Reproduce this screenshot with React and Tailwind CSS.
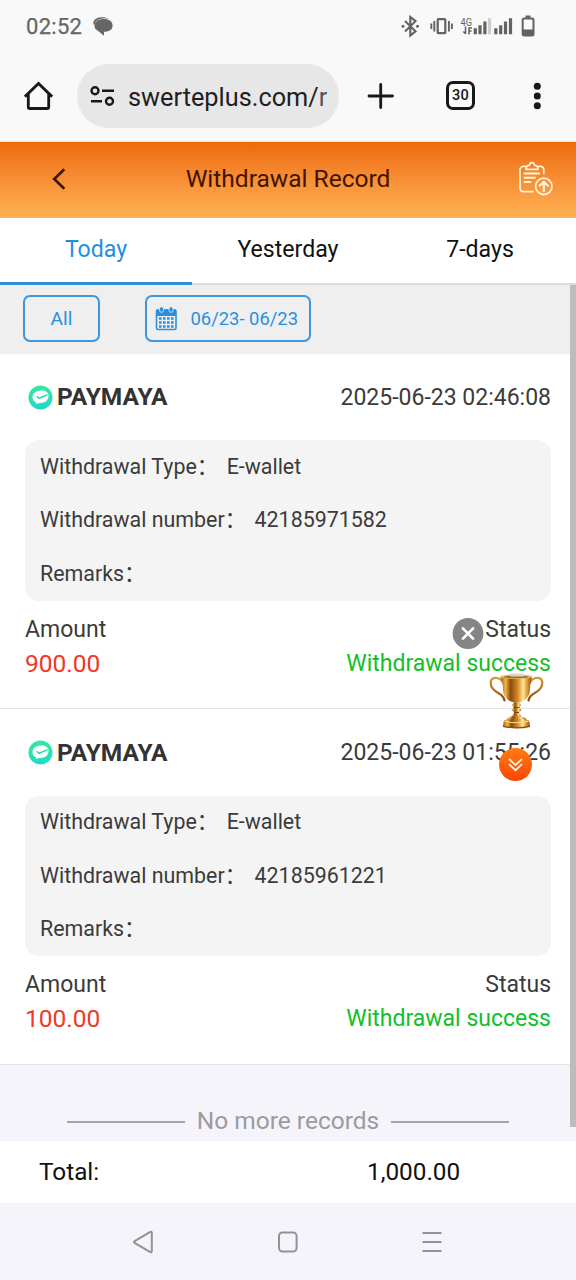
import { useState } from 'react';
import clsx from 'clsx';

const TABS = ['Today', 'Yesterday', '7-days'];

const RECORDS = [
    { id: 1, time: '2025-06-23 02:46:08', type: 'E-wallet', number: '42185971582', remarks: '', amount: '900.00' },
    { id: 2, time: '2025-06-23 01:55:26', type: 'E-wallet', number: '42185961221', remarks: '', amount: '100.00' },
];

const StatusIcons = () => (
    <svg width="140" height="26" viewBox="400 13.500 140 26" fill="none" stroke="#626262" strokeWidth="2">
        {/* bluetooth */}
        <path d="M405 20.500l10.500 10.300-5.200 4.200V16.500l5.200 4.200-10.500 10.300" strokeWidth="2.100" />
        <circle cx="403" cy="25.700" r="1.500" fill="#626262" stroke="none" />
        <circle cx="417.500" cy="25.700" r="1.500" fill="#626262" stroke="none" />
        {/* vibrate */}
        <rect x="437.700" y="18.700" width="7.600" height="14" rx="0.8" strokeWidth="2.200" />
        <path d="M434.300 20.500v10.500M431.300 23v5.500M448.900 20.500v10.500M451.900 23v5.500" strokeWidth="1.900" />
        {/* network */}
        <text x="460.500" y="25.700" fontSize="10" fontFamily="Roboto, sans-serif" fill="#626262" stroke="none" textLength="11.500" lengthAdjust="spacingAndGlyphs">4G</text>
        <path d="M465.500 26v7.500M463.300 31l2.200 2.200M469 34v-7M469 27.500h3M469 30.500h2.500" strokeWidth="1.500" />
        <path d="M475.300 33.800v-6M480 33.800v-9M484.900 33.800v-12.800" strokeWidth="3.200" />
        <path d="M489.500 33.800v-16" strokeWidth="3.200" stroke="#cdcdcd" />
        <path d="M495.800 33.800v-6M500.700 33.800v-9M505.500 33.800v-12.800M510.500 33.800v-16" strokeWidth="3.200" />
        {/* battery */}
        <rect x="522.700" y="18" width="10.800" height="17" rx="1.500" />
        <path d="M525.500 16.200h5" strokeWidth="2.400" />
        <path d="M523 29h10v6h-10z" fill="#626262" stroke="none" />
    </svg>
);

const StatusBar = () => (
    <div className="h-[53px] flex items-center justify-between pl-[26px] pr-9">
        <div className="flex items-center gap-[11px]">
            <span className="text-[22px] leading-none tracking-[0.3px] text-[#666] [-webkit-text-stroke:0.25px_#666]">02:52</span>
            <svg width="20" height="19" viewBox="0 0 20 19">
                <path d="M0.300 7C0 2.800 3.500 0.400 8 0.200c3-.2 6 .3 8 1.600-2.500-.7-6-.9-9 .1C3.500 3 2 5 1.300 8z" fill="#666" />
                <path d="M11 2c5 0 8.600 2.600 8.600 6.500 0 3.800-3 6.200-8.600 6.300V18.700L4.500 13.600C2.300 12.300 1.500 10.700 1.500 8.500 1.500 4.600 5.500 2 11 2z" fill="#666" />
            </svg>
        </div>
        <StatusIcons />
    </div>
);

const BrowserBar = () => (
    <div className="flex-1 flex items-start pt-[11px]">
        <svg className="mt-[17px] ml-6 shrink-0" width="29" height="30" viewBox="0 0 29 30" fill="none" stroke="#181818" strokeWidth="2.800">
            <path d="M0.900 15.700L14.500 2.500l13.600 13.200" />
            <path d="M4.300 13v13a1.500 1.500 0 0 0 1.500 1.500h17.400a1.500 1.500 0 0 0 1.500-1.500V13" />
        </svg>
        <div className="ml-6 h-[64px] w-[262px] shrink-0 rounded-full bg-[#e7e7e7] flex items-center pl-[13px]">
            <svg className="shrink-0" width="26" height="22" viewBox="0 0 26 22" fill="none" stroke="#181818" strokeWidth="2.400">
                <circle cx="5" cy="5.700" r="3.500" />
                <path d="M12 5.700h12M1 16.200h11" />
                <circle cx="19.500" cy="16.200" r="3.500" />
            </svg>
            <span className="ml-3 mt-[3px] w-[199px] overflow-hidden whitespace-nowrap text-[25.300px] text-[#1f1f1f]">
                swerteplus.com/<span className="text-[#555]">r</span>
            </span>
        </div>
        <svg className="mt-[18px] ml-[28px] shrink-0" width="28" height="28" viewBox="0 0 28 28" fill="none" stroke="#181818" strokeWidth="2.800" strokeLinecap="round">
            <path d="M13.700 2.500v23M2 14h23.500" />
        </svg>
        <div className="mt-[17px] ml-[51px] w-[29px] h-[29px] shrink-0 rounded-[7px] border-3 border-[#181818] flex items-center justify-center">
            <span className="pt-[2px] text-[14.500px] leading-none font-medium tracking-[0.2px] text-[#181818]">30</span>
        </div>
        <svg className="mt-[18px] ml-[58px] shrink-0" width="8" height="28" viewBox="0 0 8 28" fill="#181818">
            <circle cx="4.300" cy="4.300" r="3.500" />
            <circle cx="4.300" cy="14" r="3.500" />
            <circle cx="4.300" cy="23.700" r="3.500" />
        </svg>
    </div>
);

const PageHeader = () => (
    <header className="h-[76px] shrink-0 grid grid-cols-[1fr_auto_1fr] items-center pb-[2px] bg-gradient-to-b from-[#ee6a04] to-[#ffb253]">
        <button type="button" aria-label="Back" className="ml-[51px] justify-self-start">
            <svg width="16" height="24" viewBox="0 0 16 24" fill="none" stroke="#3a1608" strokeWidth="2.600">
                <path d="M13.300 2.200L3.200 12l10.100 9.800" />
            </svg>
        </button>
        <h1 className="text-[24.500px] leading-none text-[#431400]">Withdrawal Record</h1>
        <svg className="mr-[22px] justify-self-end" width="36" height="36" viewBox="0 0 36 36" fill="none" stroke="#fff4e0" strokeWidth="1.700" strokeLinecap="round" strokeLinejoin="round">
            <path d="M7.500 5.400H5.300A3.300 3.300 0 0 0 2 8.700v18.700a3.300 3.300 0 0 0 3.300 3.300h9.500M20.500 5.400h2a3.300 3.300 0 0 1 3.300 3.300v3.800" />
            <path d="M8 8.300c0-2.800 1.200-3.900 3.400-3.900.3-1.700 1.100-2.700 2.600-2.700s2.300 1 2.600 2.700c2.200 0 3.400 1.100 3.400 3.900z" />
            <path d="M6.500 12.500h14.800M6.500 16.700h10.500M6.500 21h6" strokeWidth="1.900" />
            <circle cx="25.800" cy="25.400" r="8.200" />
            <path d="M25.800 30.200v-9.200M21.700 24.700l4.100-4 4.100 4" strokeWidth="2.200" />
        </svg>
    </header>
);

const MayaIcon = () => (
    <svg width="25" height="25" viewBox="0 0 25 25">
        <defs>
            <linearGradient id="maya" x1="0" y1="0" x2="0" y2="1">
                <stop offset="0" stopColor="#36e8a0" />
                <stop offset="1" stopColor="#1ed9cb" />
            </linearGradient>
        </defs>
        <circle cx="12.500" cy="12.500" r="12" fill="url(#maya)" />
        <path d="M4.500 12C4.900 7.800 8.500 5.800 13 5.600c4.500-.2 7.700 1.800 7.500 5.600-.2 4-3.500 6.800-8.500 6.900-1.500.1-2.600.8-4.300.5.300-.5.200-1 0-1.500C5.500 16 4.300 14.200 4.500 12z" fill="#fff" />
        <path d="M8.700 11.200l2.500 2.100 8.300-3.700" fill="none" stroke="#27d9ac" strokeWidth="1.500" />
    </svg>
);

const DetailRow = ({ label, value }) => (
    <div className="h-[53.500px] flex items-center gap-[8.500px] text-[21.400px] text-[#3b3b3b]">
        <span>{label}：</span>
        <span>{value}</span>
    </div>
);

const RecordCard = ({ record }) => (
    <article className="h-[355.400px] shrink-0 bg-white border-b border-[#e3e3e3] px-[25px]">
        <div className="h-[86.200px] flex items-center justify-between pt-px">
            <div className="flex items-center gap-[4px] pl-[3px]">
                <MayaIcon />
                <span className="text-[24.500px] font-bold text-[#333]">PAYMAYA</span>
            </div>
            <time className="pt-px text-[23px] text-[#3b3b3b]">{record.time}</time>
        </div>
        <div className="h-[160.500px] rounded-[14px] bg-[#f4f4f4] px-[15px]">
            <DetailRow label="Withdrawal Type" value={record.type} />
            <DetailRow label="Withdrawal number" value={record.number} />
            <DetailRow label="Remarks" value={record.remarks} />
        </div>
        <div className="flex justify-between pt-[11px] text-[23px] leading-[35px] text-[#3b3b3b]">
            <div>
                <p>Amount</p>
                <p className="text-[24.500px] leading-[34px] text-[#ee3a24]">{record.amount}</p>
            </div>
            <div className="text-right">
                <p>Status</p>
                <p className="leading-[33px] text-[#10c129]">Withdrawal success</p>
            </div>
        </div>
    </article>
);

const Trophy = () => (
    <svg width="56" height="56" viewBox="0 0 56 56">
        <defs>
            <linearGradient id="cup">
                <stop offset="0" stopColor="#9b5710" />
                <stop offset="0.16" stopColor="#f2b64a" />
                <stop offset="0.32" stopColor="#8c4b0d" />
                <stop offset="0.55" stopColor="#d58b26" />
                <stop offset="0.72" stopColor="#ffe79a" />
                <stop offset="0.86" stopColor="#d9952f" />
                <stop offset="1" stopColor="#84480e" />
            </linearGradient>
            <linearGradient id="handle" x1="0" y1="0" x2="0" y2="1">
                <stop offset="0" stopColor="#d39b38" />
                <stop offset="0.5" stopColor="#b8731b" />
                <stop offset="1" stopColor="#8b4b12" />
            </linearGradient>
        </defs>
        <path d="M14 9.500C10.500 3.500 3 3.500 1.800 8.500 1 14.500 5 17.500 10 20.500c3.500 2 5 4 5.500 7" fill="none" stroke="url(#handle)" strokeWidth="2.200" strokeLinecap="round" />
        <path d="M41 9.500C44.500 3.500 52 3.500 53.200 8.500 54 14.500 50 17.500 45 20.500c-3.500 2-5 4-5.500 7" fill="none" stroke="url(#handle)" strokeWidth="2.200" strokeLinecap="round" />
        <path d="M11.500 4h31.500c-1.200 4-1.800 7-2 12.500-.3 7.500-5 12.500-13.500 13.500-8.500-1-13.200-6-13.500-13.500-.2-5.500-1-8.500-2.500-12.500z" fill="url(#cup)" />
        <ellipse cx="27.300" cy="3.700" rx="16" ry="2.200" fill="#e5ba68" />
        <ellipse cx="27.300" cy="3.900" rx="12.500" ry="1.300" fill="#a66c24" />
        <path d="M21.500 0.500h13v3h-13z" fill="#dbd7cd" />
        <path d="M24.500 29.500h6l1.500 2.800-2 2.200 2.500 2.500-2.500 2.500 2.500 4.500H22.500l2.500-4.500-2.500-2.500 2.500-2.500-2-2.200z" fill="url(#cup)" />
        <path d="M24.500 34.500h6M25 39.500h5" stroke="#7d430d" strokeWidth="1" />
        <path d="M17 47.500c1.500-3.500 5.500-4.500 10.500-4.500s9 1 10.500 4.500z" fill="url(#cup)" />
        <path d="M15 47.500q12.500-3.500 25 0l1.200 6q-13.500 3-27.400 0z" fill="url(#cup)" />
        <path d="M15.500 48.300q12 3 24 0" fill="none" stroke="#fbe08c" strokeWidth="1.100" />
        <path d="M14 53.300q13.500 3 27 0" fill="none" stroke="#8b4b0d" strokeWidth="1.300" />
    </svg>
);

/* Promo widget that floats over the list */
const FloatingPromo = () => (
    <>
        <button type="button" aria-label="Close" className="absolute left-[452px] top-[618px]">
            <svg width="32" height="32" viewBox="0 0 32 32">
                <circle cx="16" cy="15.500" r="15.400" fill="#858585" />
                <path d="M10.900 10.400l10.200 10.200M21.100 10.400L10.900 20.600" stroke="#fff" strokeWidth="2.700" strokeLinecap="round" />
            </svg>
        </button>
        <div className="absolute left-[489px] top-[673px]">
            <Trophy />
        </div>
        <button type="button" aria-label="Expand" className="absolute left-[499px] top-[748px] w-[33px] h-[33px] rounded-full bg-gradient-to-b from-[#ff7a12] to-[#f94406] flex items-center justify-center">
            <svg width="17" height="17" viewBox="0 0 17 17" fill="none" stroke="#fff0df" strokeWidth="1.800">
                <path d="M2 3l6.500 6L15 3M2 8.200l6.500 6 6.500-6" />
            </svg>
        </button>
    </>
);

const CalendarIcon = () => (
    <svg width="22" height="25" viewBox="0 0 22 25" fill="#2b8fdd">
        <path d="M1.500 3.500h19.500V10h-19.500z" />
        <rect x="1.500" y="4" width="19.500" height="19.500" rx="1.500" fill="none" stroke="#2b8fdd" strokeWidth="1.600" />
        <rect x="4.500" y="0.800" width="4" height="5.500" rx="2" stroke="#efefef" strokeWidth="0.800" />
        <rect x="14" y="0.800" width="4" height="5.500" rx="2" stroke="#efefef" strokeWidth="0.800" />
        <path d="M4 12.500h14.700M4 16.500h14.700M4 20.500h14.700" stroke="#2b8fdd" strokeWidth="2.500" strokeDasharray="2.600 1.400" />
    </svg>
);

const App = () => {
    const [activeTab, setActiveTab] = useState('Today');

    return (
        <div className="relative w-[576px] h-[1280px] overflow-hidden flex flex-col bg-[#f5f4fa] font-[Roboto,'Noto_Sans_CJK_SC',sans-serif]">
            <div className="h-[142px] shrink-0 flex flex-col bg-[#f9f9f9] border-b border-[#e4e8ec]">
                <StatusBar />
                <BrowserBar />
            </div>

            <PageHeader />

            <nav className="h-[67px] shrink-0 grid grid-cols-3 bg-white">
                {TABS.map((tab) => (
                    <button
                        key={tab}
                        type="button"
                        onClick={() => setActiveTab(tab)}
                        className={clsx(
                            'text-[23.100px]',
                            tab === activeTab
                                ? 'pt-px border-b-[3px] border-[#2b8fdd] text-[#1f8fe0]'
                                : 'border-b-2 border-[#dcdcdc] text-[#111]'
                        )}
                    >
                        {tab}
                    </button>
                ))}
            </nav>

            <div className="h-[69px] shrink-0 flex items-start bg-[#efefef] pt-[10px] pl-[23px]">
                <button type="button" className="w-[77px] h-[47px] rounded-[7px] border-2 border-[#3c97de] pt-px text-[19.200px] text-[#2b8fdd]">
                    All
                </button>
                <button type="button" className="ml-[45px] w-[166px] h-[47px] rounded-[7px] border-2 border-[#3c97de] flex items-center pl-[8px] gap-[13.500px] text-[18.400px] text-[#2b8fdd]">
                    <CalendarIcon />
                    <span className="whitespace-nowrap">06/23- 06/23</span>
                </button>
            </div>

            <main className="flex-1 min-h-0 flex flex-col">
                {RECORDS.map((record) => (
                    <RecordCard key={record.id} record={record} />
                ))}
                <div className="flex-1 flex items-end justify-center gap-3 pb-px text-[24.500px] text-[#9b9b9f]">
                    <span className="mb-[17px] w-[118px] h-[2px] bg-[#a4a4a8]" />
                    <span className="whitespace-nowrap">No more records</span>
                    <span className="mb-[17px] w-[118px] h-[2px] bg-[#a4a4a8]" />
                </div>
            </main>

            <div className="h-[62px] shrink-0 flex items-center bg-white pl-[39px] text-[24.300px] text-[#111]">
                <span className="w-[328px]">Total:</span>
                <span>1,000.00</span>
            </div>

            <footer className="h-[77px] shrink-0 flex items-center justify-between pl-[132px] pr-[134px]">
                <svg width="22" height="24" viewBox="0 0 22 24" fill="none" stroke="#929296" strokeWidth="2" strokeLinejoin="round">
                    <path d="M18.300 1.900L2.600 11.200q-1.300.8 0 1.600l15.700 9.300q1.500.6 1.500-1V2.900q0-1.600-1.500-1z" />
                </svg>
                <svg width="20" height="22" viewBox="0 0 20 22" fill="none" stroke="#929296" strokeWidth="2">
                    <rect x="1" y="1.500" width="17.600" height="19" rx="3.500" />
                </svg>
                <svg width="20" height="22" viewBox="0 0 20 22" stroke="#929296" strokeWidth="2">
                    <path d="M0.500 2h19M0.500 11h19M0.500 20h19" />
                </svg>
            </footer>

            <div className="absolute right-0 top-[285px] w-[6px] h-[842px] bg-[#bcbcbc]" />
            <FloatingPromo />
        </div>
    );
};

export default App;
